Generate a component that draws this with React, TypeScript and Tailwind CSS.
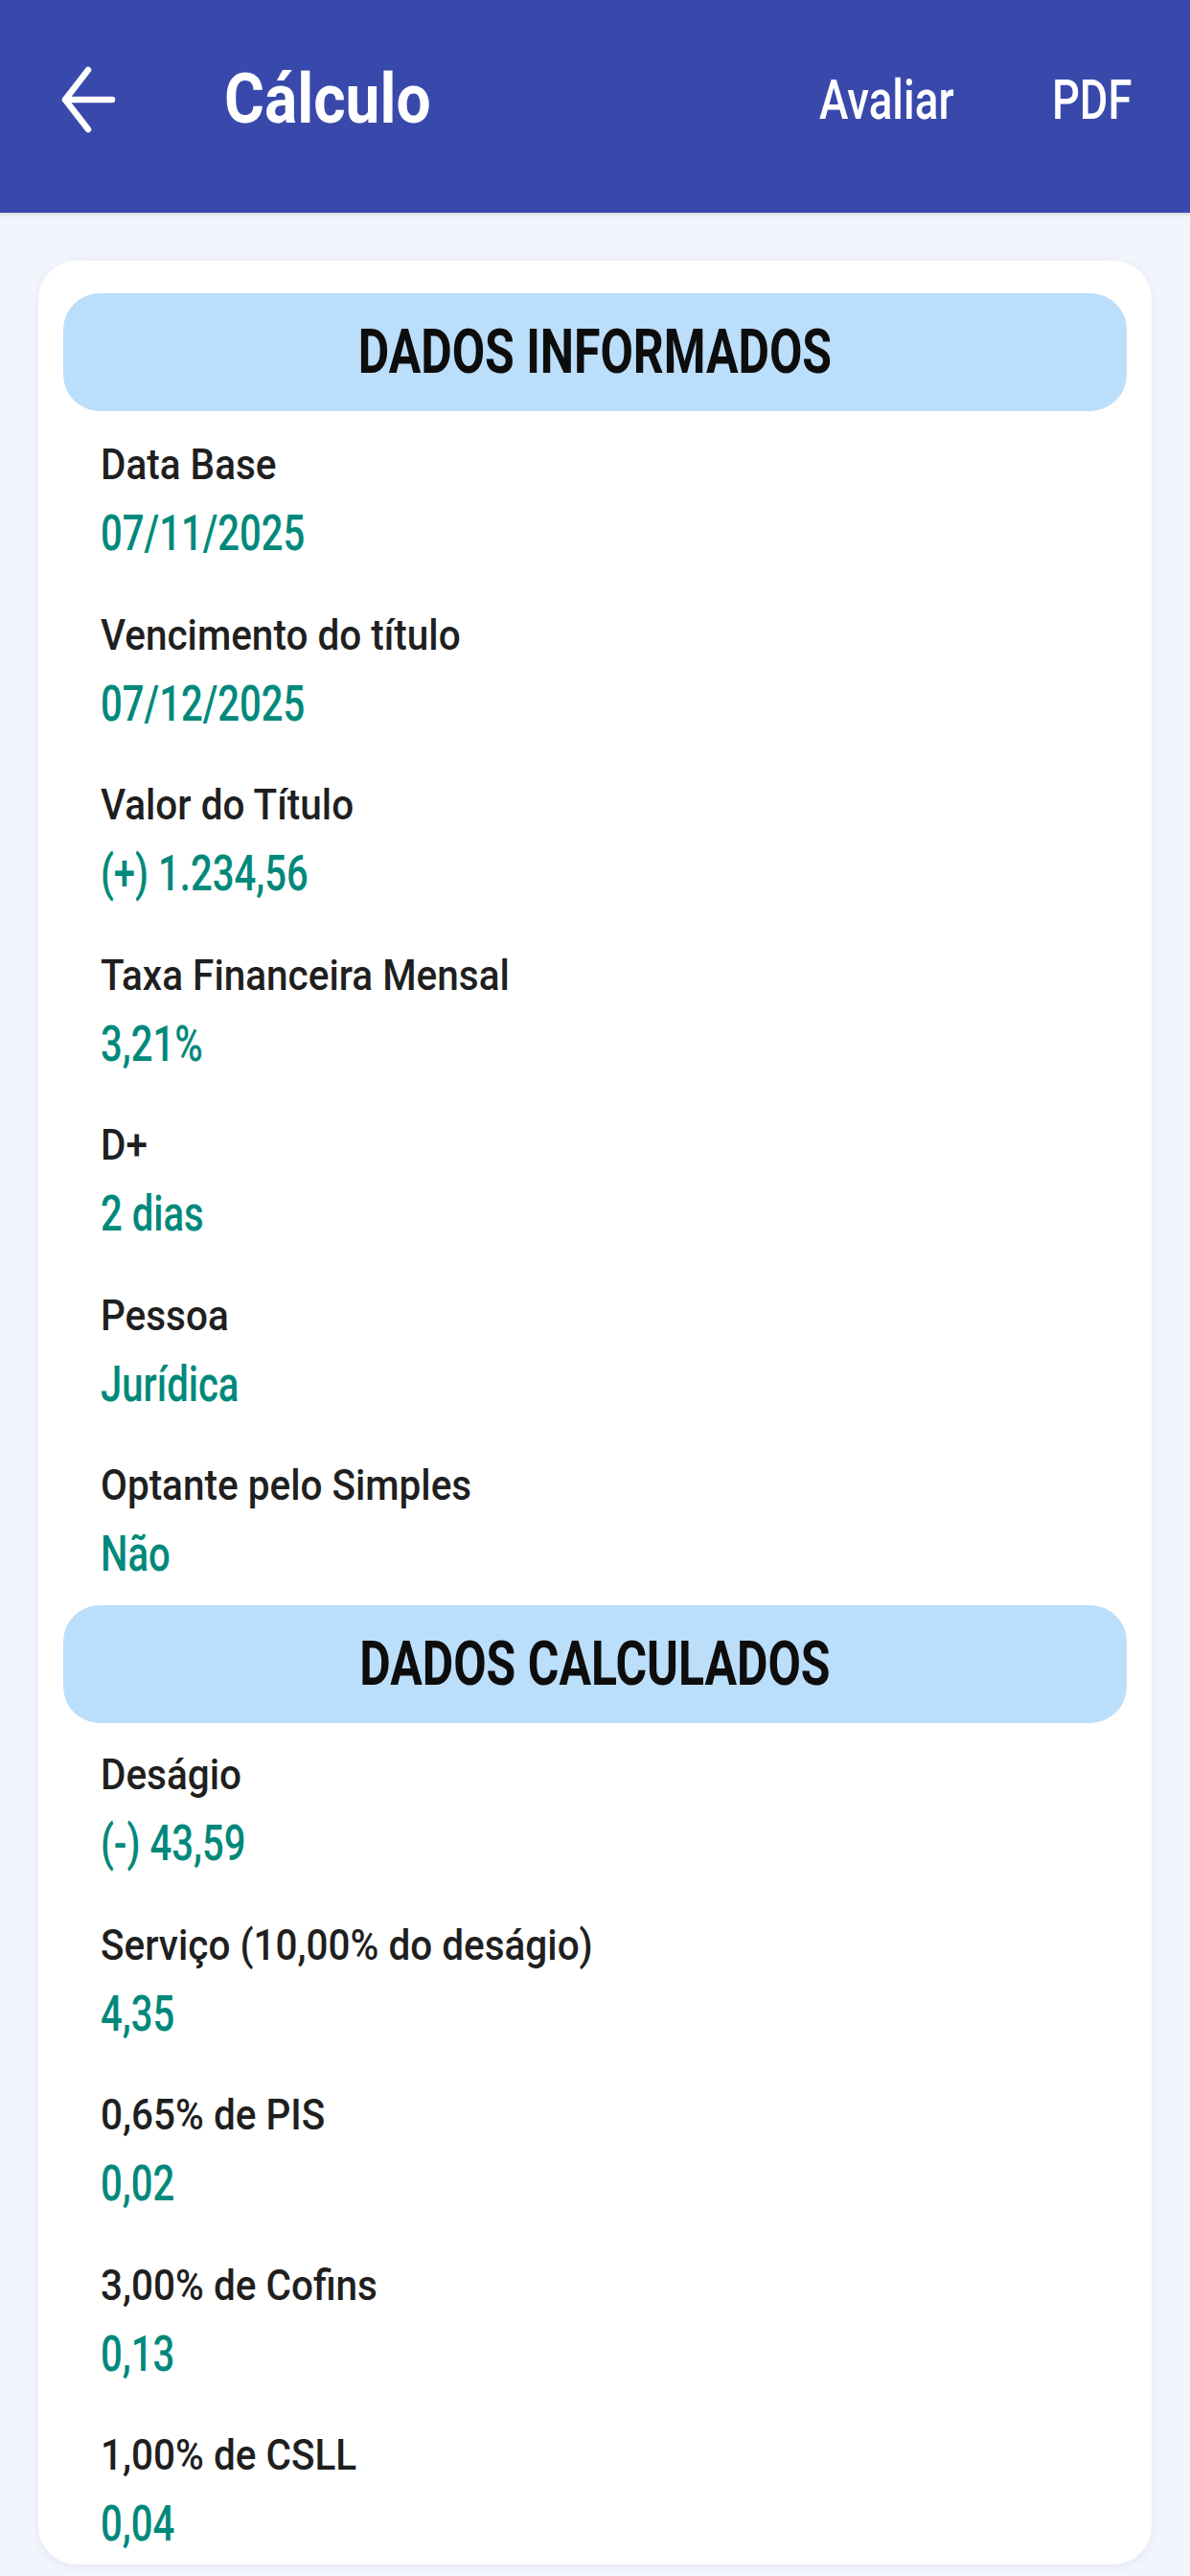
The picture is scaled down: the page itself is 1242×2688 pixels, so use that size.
import React from "react";

type Item = { label: string; value: string };

const informados: Item[] = [
  { label: "Data Base", value: "07/11/2025" },
  { label: "Vencimento do título", value: "07/12/2025" },
  { label: "Valor do Título", value: "(+) 1.234,56" },
  { label: "Taxa Financeira Mensal", value: "3,21%" },
  { label: "D+", value: "2 dias" },
  { label: "Pessoa", value: "Jurídica" },
  { label: "Optante pelo Simples", value: "Não" },
];

const calculados: Item[] = [
  { label: "Deságio", value: "(-) 43,59" },
  { label: "Serviço (10,00% do deságio)", value: "4,35" },
  { label: "0,65% de PIS", value: "0,02" },
  { label: "3,00% de Cofins", value: "0,13" },
  { label: "1,00% de CSLL", value: "0,04" },
];

function Pill({ title }: { title: string }) {
  return (
    <div className="flex h-[123px] items-center justify-center rounded-[38px] bg-[#bbdefb]">
      <span className="inline-block origin-center scale-x-[0.78] whitespace-nowrap text-[64px] font-bold leading-none text-[#0d0d0d]">
        {title}
      </span>
    </div>
  );
}

function List({ items }: { items: Item[] }) {
  return (
    <div className="flex flex-col gap-[33.5px] px-[39px]">
      {items.map((it) => (
        <div key={it.label} className="flex flex-col">
          <div className="h-[64px] leading-[64px]">
            <span className="inline-block origin-left scale-x-[0.92] whitespace-nowrap text-[44px] font-medium text-[#1f1f1f]">
              {it.label}
            </span>
          </div>
          <div className="h-[80px] leading-[80px]">
            <span className="inline-block origin-left scale-x-[0.77] whitespace-nowrap text-[52px] font-medium text-[#00897b]">
              {it.value}
            </span>
          </div>
        </div>
      ))}
    </div>
  );
}

export default function App() {
  return (
    <div
      className="h-[2688px] overflow-hidden bg-[#f2f5fc]"
      style={{ fontFamily: "Roboto, 'Noto Sans', sans-serif" }}
    >
      <header className="flex h-[222px] items-center bg-[#3949ab] pb-[14px] pl-[63px] pr-[64px] shadow-[0_2px_4px_rgba(0,0,0,0.12)]">
        <svg width="58" height="70" viewBox="0 0 58 70" className="flex-none">
          <path
            d="M5 35 H54 M5 35 L29 4 M5 35 L29 66"
            stroke="#ffffff"
            strokeWidth="6.5"
            strokeLinecap="round"
            strokeLinejoin="round"
            fill="none"
          />
        </svg>
        <div className="ml-[113px] flex-none">
          <span className="inline-block origin-left scale-x-[0.89] whitespace-nowrap text-[72px] font-bold leading-none text-white">
            Cálculo
          </span>
        </div>
        <div className="flex-1" />
        <div className="w-[140px] flex-none">
          <span className="inline-block origin-left scale-x-[0.79] whitespace-nowrap text-[58px] font-medium leading-none text-white">
            Avaliar
          </span>
        </div>
        <div className="ml-[103px] w-[80px] flex-none">
          <span className="inline-block origin-left scale-x-[0.78] whitespace-nowrap text-[58px] font-medium leading-none text-white">
            PDF
          </span>
        </div>
      </header>

      <main className="px-[40px] pt-[50px]">
        <div className="rounded-[40px] bg-white px-[26px] pb-[2px] pt-[34px] shadow-[0_2px_10px_rgba(60,70,120,0.08)]">
          <Pill title="DADOS INFORMADOS" />
          <div className="mt-[24px]">
            <List items={informados} />
          </div>
          <div className="mt-[13px]">
            <Pill title="DADOS CALCULADOS" />
          </div>
          <div className="mt-[22px]">
            <List items={calculados} />
          </div>
        </div>
      </main>
    </div>
  );
}
